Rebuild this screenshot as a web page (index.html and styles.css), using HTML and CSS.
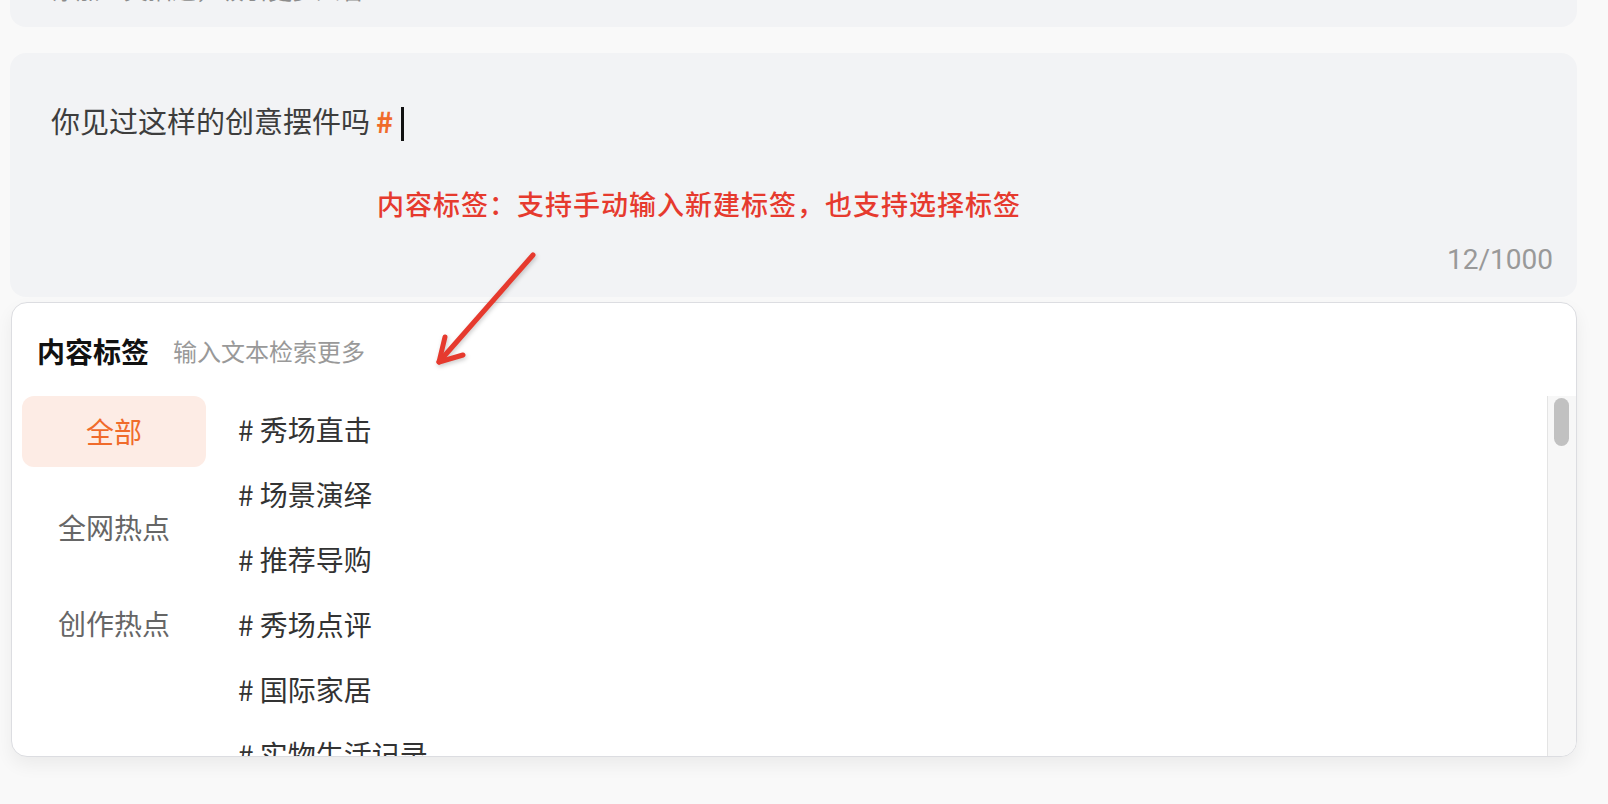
FILE: index.html
```html
<!DOCTYPE html>
<html lang="zh-CN">
<head>
  <meta charset="UTF-8">
  <meta name="viewport" content="width=device-width, initial-scale=1.0">
  <title>内容标签</title>
  <link rel="stylesheet" href="styles.css">
</head>
<body>
  <!-- previous field, scrolled almost out of view -->
  <div class="top-card">
    <p class="top-text">添加正文描述，吸引更多人看</p>
  </div>

  <!-- Editor -->
  <div class="editor">
    <p class="editor-text">你见过这样的创意摆件吗<span class="hash">#</span><span class="caret"></span></p>
    <div class="count">12/1000</div>
  </div>

  <!-- Tag picker -->
  <div class="tag-panel">
    <div class="tag-head">
      <span class="tag-title">内容标签</span>
      <span class="tag-hint">输入文本检索更多</span>
    </div>
    <div class="tag-body">
      <ul class="tag-cats">
        <li class="cat active">全部</li>
        <li class="cat">全网热点</li>
        <li class="cat">创作热点</li>
      </ul>
      <ul class="tag-list">
        <li># 秀场直击</li>
        <li># 场景演绎</li>
        <li># 推荐导购</li>
        <li># 秀场点评</li>
        <li># 国际家居</li>
        <li># 实物生活记录</li>
      </ul>
      <div class="scrollbar"><div class="thumb"></div></div>
    </div>
  </div>

  <!-- Annotation -->
  <div class="note">内容标签：支持手动输入新建标签，也支持选择标签</div>
  <svg class="note-arrow" width="120" height="130" viewBox="0 0 120 130">
    <g fill="none" stroke="#e63a2e" stroke-width="5" stroke-linecap="round" stroke-linejoin="round">
      <path d="M103 7 L9 114"/>
      <path d="M15 89 L9 114 L33 107"/>
    </g>
  </svg>
</body>
</html>
```

FILE: styles.css
```css
body {
  margin: 0;
  padding: 0 31px 0 10px;
  background-color: #f9f9f9;
  font-family: "Noto Sans CJK SC", "Noto Sans", sans-serif;
  position: relative;
  height: 804px;
  overflow: hidden;
}
p {
  margin: 0;
}
ul {
  list-style: none;
  margin: 0;
  padding: 0;
}
.top-card {
  height: 27px;
  background-color: #f2f3f5;
  border-radius: 0 0 16px 16px;
  overflow: hidden;
  padding: 0 42px;
}
.top-text {
  margin-top: -26px;
  font-size: 24px;
  line-height: 30px;
  color: #8c8c8c;
}
.editor {
  margin-top: 26px;
  height: 244px;
  box-sizing: border-box;
  background-color: #f2f3f5;
  border-radius: 16px;
  padding: 47px 24px 22px 41px;
  display: flex;
  flex-direction: column;
  justify-content: space-between;
}
.editor-text {
  font-size: 29px;
  line-height: 40px;
  color: #3d3d3d;
}
.hash {
  color: #f06b2b;
  font-weight: bold;
  margin-left: 6px;
}
.caret {
  display: inline-block;
  width: 3px;
  height: 34px;
  background-color: #111;
  margin-left: 8px;
  vertical-align: -8px;
}
.count {
  align-self: flex-end;
  font-family: Roboto, sans-serif;
  font-size: 28px;
  line-height: 30px;
  color: #999;
}
.tag-panel {
  margin: 5px 0 0 1px;
  height: 455px;
  box-sizing: border-box;
  background-color: #fff;
  border: 1px solid #dcdde1;
  border-radius: 16px;
  box-shadow: 0 8px 18px rgba(0, 0, 0, 0.06);
  overflow: hidden;
  display: flex;
  flex-direction: column;
}
.tag-head {
  padding: 28px 25px 25px;
  display: flex;
  align-items: center;
  gap: 24px;
  line-height: 40px;
}
.tag-title {
  font-size: 28px;
  font-weight: bold;
  color: #111;
}
.tag-hint {
  font-size: 24px;
  color: #999;
}
.tag-body {
  flex: 1;
  display: flex;
  min-height: 0;
}
.tag-cats {
  width: 184px;
  margin-left: 10px;
  display: flex;
  flex-direction: column;
  gap: 25px;
}
.cat {
  height: 71px;
  line-height: 71px;
  text-align: center;
  font-size: 28px;
  color: #666;
  border-radius: 12px;
}
.cat.active {
  background-color: #fdece5;
  color: #f06b2b;
}
.tag-list {
  flex: 1;
  padding: 1px 0 0 32px;
  overflow: hidden;
}
.tag-list li {
  height: 65px;
  line-height: 65px;
  font-size: 28px;
  color: #333;
}
.scrollbar {
  width: 29px;
  background-color: #f7f7f7;
  border-left: 1px solid #e4e4e4;
  padding: 2px 0 0 6px;
  box-sizing: border-box;
}
.thumb {
  width: 15px;
  height: 48px;
  border-radius: 8px;
  background-color: #c1c1c1;
}
.note {
  position: absolute;
  left: 377px;
  top: 186px;
  font-size: 27px;
  font-weight: 500;
  letter-spacing: 1px;
  line-height: 36px;
  color: #e63a2e;
}
.note-arrow {
  position: absolute;
  left: 430px;
  top: 248px;
  filter: drop-shadow(1px 2px 2px rgba(0, 0, 0, 0.2));
}
```
